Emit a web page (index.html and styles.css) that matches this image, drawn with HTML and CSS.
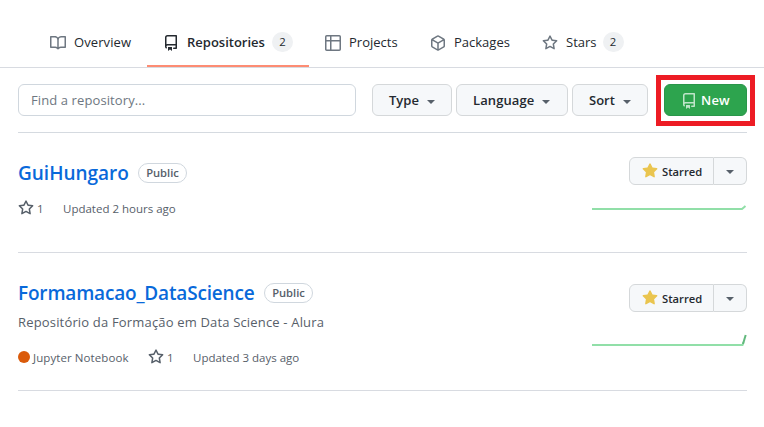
FILE: index.html
```
<!DOCTYPE html>
<html lang="en">
<head>
<meta charset="utf-8">
<title>Repositories</title>
<link rel="stylesheet" href="styles.css">
</head>
<body>
<svg class="defs" width="0" height="0" aria-hidden="true">
  <symbol id="book" viewBox="0 0 16 16"><path fill-rule="evenodd" d="M0 1.75A.75.75 0 01.75 1h4.253c1.227 0 2.317.59 3 1.501A3.744 3.744 0 0111.006 1h4.245a.75.75 0 01.75.75v10.5a.75.75 0 01-.75.75h-4.507a2.25 2.25 0 00-1.591.659l-.622.621a.75.75 0 01-1.06 0l-.622-.621A2.25 2.25 0 005.258 13H.75a.75.75 0 01-.75-.75V1.75zm8.755 3a2.25 2.25 0 012.25-2.25H14.5v9h-3.757c-.71 0-1.4.201-1.992.572l.004-7.322zm-1.504 7.324l.004-5.073-.002-2.253A2.25 2.25 0 005.003 2.5H1.5v9h3.757a3.75 3.75 0 011.994.574z"/></symbol>
  <symbol id="repo" viewBox="0 0 16 16"><path fill-rule="evenodd" d="M2 2.5A2.5 2.5 0 014.5 0h8.75a.75.75 0 01.75.75v12.5a.75.75 0 01-.75.75h-2.5a.75.75 0 110-1.5h1.75v-2h-8a1 1 0 00-.714 1.7.75.75 0 01-1.072 1.05A2.495 2.495 0 012 11.5v-9zm10.5-1V9h-8c-.356 0-.694.074-1 .208V2.5a1 1 0 011-1h8zM5 12.25v3.25a.25.25 0 00.4.2l1.45-1.087a.25.25 0 01.3 0L8.6 15.7a.25.25 0 00.4-.2v-3.25a.25.25 0 00-.25-.25h-3.5a.25.25 0 00-.25.25z"/></symbol>
  <symbol id="table" viewBox="0 0 16 16"><path fill-rule="evenodd" d="M1.75 0A1.75 1.75 0 000 1.75v12.5C0 15.216.784 16 1.75 16h12.5A1.75 1.75 0 0016 14.25V1.75A1.75 1.75 0 0014.25 0H1.75zM1.5 1.75a.25.25 0 01.25-.25H5V5H1.5V1.75zM6.5 1.5V5h8V1.75a.25.25 0 00-.25-.25H6.5zm8 5h-8v8h7.75a.25.25 0 00.25-.25V6.5zM5 14.5v-8H1.500v7.75c0 .138.112.25.25.25H5z"/></symbol>
  <symbol id="package" viewBox="0 0 16 16"><path fill-rule="evenodd" d="M8.878.392a1.750 1.750 0 00-1.756 0l-5.250 3.045A1.750 1.750 0 001 4.951v6.098c0 .624.332 1.200.872 1.514l5.250 3.045a1.750 1.750 0 001.756 0l5.250-3.045c.540-.313.872-.890.872-1.514V4.951c0-.624-.332-1.200-.872-1.514L8.878.392zM7.875 1.690a.250.250 0 01.250 0l4.630 2.685L8 7.133 3.245 4.375l4.630-2.685zM2.500 5.677v5.372c0 .090.047.171.125.216l4.625 2.683V8.432L2.500 5.677zm6.250 8.271l4.625-2.683a.250.250 0 00.125-.216V5.677L8.750 8.432v5.516z"/></symbol>
  <symbol id="star" viewBox="0 0 16 16"><path fill-rule="evenodd" d="M8 .25a.75.75 0 01.673.418l1.882 3.815 4.210.612a.75.75 0 01.416 1.279l-3.046 2.970.719 4.192a.75.75 0 01-1.088.791L8 12.347l-3.766 1.980a.75.75 0 01-1.088-.790l.720-4.194L.818 6.374a.75.75 0 01.416-1.280l4.210-.611L7.327.668A.75.75 0 018 .25zm0 2.445L6.615 5.500a.75.75 0 01-.564.410l-3.097.450 2.240 2.184a.75.75 0 01.216.664l-.528 3.084 2.769-1.456a.75.75 0 01.698 0l2.770 1.456-.530-3.084a.75.75 0 01.216-.664l2.240-2.183-3.096-.450a.75.75 0 01-.564-.410L8 2.694v.001z"/></symbol>
  <symbol id="star-fill" viewBox="0 0 16 16"><path d="M8 .25a.75.75 0 01.673.418l1.882 3.815 4.210.612a.75.75 0 01.416 1.279l-3.046 2.970.719 4.192a.75.75 0 01-1.088.791L8 12.347l-3.766 1.980a.75.75 0 01-1.088-.790l.720-4.194L.818 6.374a.75.75 0 01.416-1.280l4.210-.611L7.327.668A.75.75 0 018 .25z"/></symbol>
</svg>

<nav class="tabs">
  <a class="tab tab-overview"><svg class="icon"><use href="#book"/></svg><span>Overview</span></a>
  <a class="tab tab-repos selected"><svg class="icon"><use href="#repo"/></svg><span>Repositories</span><span class="counter">2</span></a>
  <a class="tab tab-projects"><svg class="icon"><use href="#table"/></svg><span>Projects</span></a>
  <a class="tab tab-packages"><svg class="icon"><use href="#package"/></svg><span>Packages</span></a>
  <a class="tab tab-stars"><svg class="icon"><use href="#star"/></svg><span>Stars</span><span class="counter">2</span></a>
</nav>

<main>
  <div class="toolbar">
    <input class="search" type="text" placeholder="Find a repository...">
    <button class="btn type">Type<i class="caret"></i></button>
    <button class="btn language">Language<i class="caret"></i></button>
    <button class="btn sort">Sort<i class="caret"></i></button>
    <div class="highlight"><button class="btn new"><svg class="icon"><use href="#repo"/></svg>New</button></div>
  </div>

  <article class="repo first">
    <div class="info">
      <h3><a class="name">GuiHungaro</a><span class="label">Public</span></h3>
      <div class="meta"><span class="stars"><svg class="icon"><use href="#star"/></svg>1</span><span class="updated">Updated 2 hours ago</span></div>
    </div>
    <div class="side">
      <div class="starred"><button class="star-btn"><svg class="icon"><use href="#star-fill"/></svg>Starred</button><button class="star-menu"><i class="caret"></i></button></div>
      <svg class="spark" width="155" height="30" viewBox="0 0 155 30"><path class="base" d="M0 24H150L153.500 21"/></svg>
    </div>
  </article>

  <article class="repo second">
    <div class="info">
      <h3><a class="name">Formamacao_DataScience</a><span class="label">Public</span></h3>
      <p class="desc">Repositório da Formação em Data Science - Alura</p>
      <div class="meta"><span class="lang"><i class="dot"></i>Jupyter Notebook</span><span class="stars"><svg class="icon"><use href="#star"/></svg>1</span><span class="updated">Updated 3 days ago</span></div>
    </div>
    <div class="side">
      <div class="starred"><button class="star-btn"><svg class="icon"><use href="#star-fill"/></svg>Starred</button><button class="star-menu"><i class="caret"></i></button></div>
      <svg class="spark" width="155" height="30" viewBox="0 0 155 30"><path class="base" d="M0 19H150.500L151.500 16"/><path class="peak" d="M151 18L153.700 9"/></svg>
    </div>
  </article>
</main>
</body>
</html>
```
FILE: styles.css
```
* { box-sizing: border-box; }
body {
  margin: 0;
  width: 764px;
  height: 427px;
  overflow: hidden;
  background: #fff;
  color: #24292f;
  font-family: "Open Sans", "Noto Sans", sans-serif;
  font-size: 13px;
}
button, input { font: inherit; color: inherit; margin: 0; }
.defs { display: block; }
.icon { width: 16px; height: 16px; fill: currentColor; flex: none; }

.tabs {
  display: flex;
  height: 68px;
  padding: 17px 0 0 34px;
  border-bottom: 1px solid #d8dbe1;
}
.tab {
  display: flex;
  align-items: center;
  height: 50px;
  padding: 2px 0 0 16px;
  border-bottom: 2px solid transparent;
  white-space: nowrap;
}
.tab .icon { margin: 1px 8px 0 0; color: #6e7781; }
.tab.selected { border-color: #fd8c73; font-weight: 600; }
.tab.selected .icon { color: #24292f; }
.tab-overview { width: 113px; letter-spacing: 0.1px; }
.tab-repos { width: 162px; }
.tab-projects { width: 105px; }
.tab-packages { width: 112px; }
.tab-stars { width: 114px; }
.counter {
  width: 21px;
  height: 20px;
  margin-left: 7px;
  border-radius: 10px;
  background: #eff1f3;
  font-size: 11.3px;
  font-weight: 500;
  line-height: 20px;
  text-align: center;
}
.tab-stars .counter { margin-left: 6px; }

main { padding: 0 17px 0 18px; }
.toolbar {
  display: flex;
  height: 65px;
  padding-top: 16px;
  border-bottom: 1px solid #d5dae0;
}
.search {
  width: 338px;
  height: 32px;
  margin-right: 16px;
  padding: 0 12px;
  border: 1px solid #d0d7de;
  border-radius: 6px;
  background: #fff;
  letter-spacing: 0.1px;
}
.search::placeholder { color: #6e7781; opacity: 1; }
.btn {
  display: flex;
  align-items: center;
  height: 32px;
  padding: 0 0 0 16px;
  border: 1px solid #d5d8da;
  border-radius: 6px;
  background: #f6f8fa;
  font-weight: 600;
}
.caret {
  margin: 3px 0 0 8px;
  border: 4px solid transparent;
  border-top-color: #57606a;
  border-bottom: 0;
}
.type { width: 80px; margin-right: 4px; }
.language { width: 112px; margin-right: 4px; letter-spacing: 0.1px; }
.sort { width: 76px; }
.highlight {
  width: 99px;
  height: 51px;
  flex: none;
  margin: -9px -8px 0 8px;
  padding: 4px 3px;
  border: 5px solid #ed1c24;
}
.new {
  width: 83px;
  border-color: #2a964a;
  background: #2da44e;
  color: #fff;
  letter-spacing: 0.2px;
}
.new .icon { margin: 1px 4px 0 0; color: #bfe5c9; }

.repo {
  display: flex;
  justify-content: space-between;
  border-bottom: 1px solid #d8dbe1;
}
.first { height: 120px; padding-top: 24px; }
.second { height: 138px; padding-top: 24px; }
h3 { display: flex; align-items: center; height: 32px; margin: 0; }
.name {
  color: #0969da;
  font-size: 19px;
  font-weight: 550;
  white-space: nowrap;
}
.first .name { width: 110px; }
.second .name { width: 236px; letter-spacing: -0.18px; }
.label {
  width: 49px;
  height: 20px;
  margin-left: 10px;
  border: 1px solid #d0d7de;
  border-radius: 10px;
  color: #57606a;
  font-size: 11.2px;
  font-weight: 600;
  line-height: 18px;
  text-align: center;
}
.desc {
  height: 20px;
  margin: 3px 0 0;
  color: #57606a;
  line-height: 20px;
  letter-spacing: 0.17px;
}
.meta {
  display: flex;
  align-items: center;
  height: 20px;
  margin-top: 9px;
  color: #57606a;
  font-size: 11.5px;
}
.second .meta { margin-top: 15px; }
.stars { display: flex; align-items: center; width: 45px; }
.stars .icon { margin: -1px 3px 0 0; }
.lang { display: flex; align-items: center; width: 130px; letter-spacing: 0.08px; }
.dot { width: 12px; height: 12px; margin-right: 3px; border-radius: 50%; background: #da5b0b; }
.side { display: flex; flex-direction: column; align-items: flex-end; }
.starred { display: flex; width: 118px; height: 28px; }
.second .starred { margin-top: 7px; }
.star-btn, .star-menu {
  display: flex;
  align-items: center;
  height: 28px;
  padding: 0;
  border: 1px solid #d5d8da;
  background: #f6f8fa;
  font-size: 11.2px;
  font-weight: 600;
}
.star-btn { width: 85px; padding-left: 12px; border-radius: 6px 0 0 6px; }
.star-btn .icon { margin: -1px 4px 0 0; color: #eac54f; }
.star-menu { width: 33px; border-left: 0; border-radius: 0 6px 6px 0; justify-content: center; }
.star-menu .caret { margin: 2px 0 0; }
.spark { display: block; }
.second .spark { margin-top: 14px; }
.spark path { fill: none; stroke-width: 2; }
.base { stroke: #91dfa8; }
.peak { stroke: #62b87d; }
```
